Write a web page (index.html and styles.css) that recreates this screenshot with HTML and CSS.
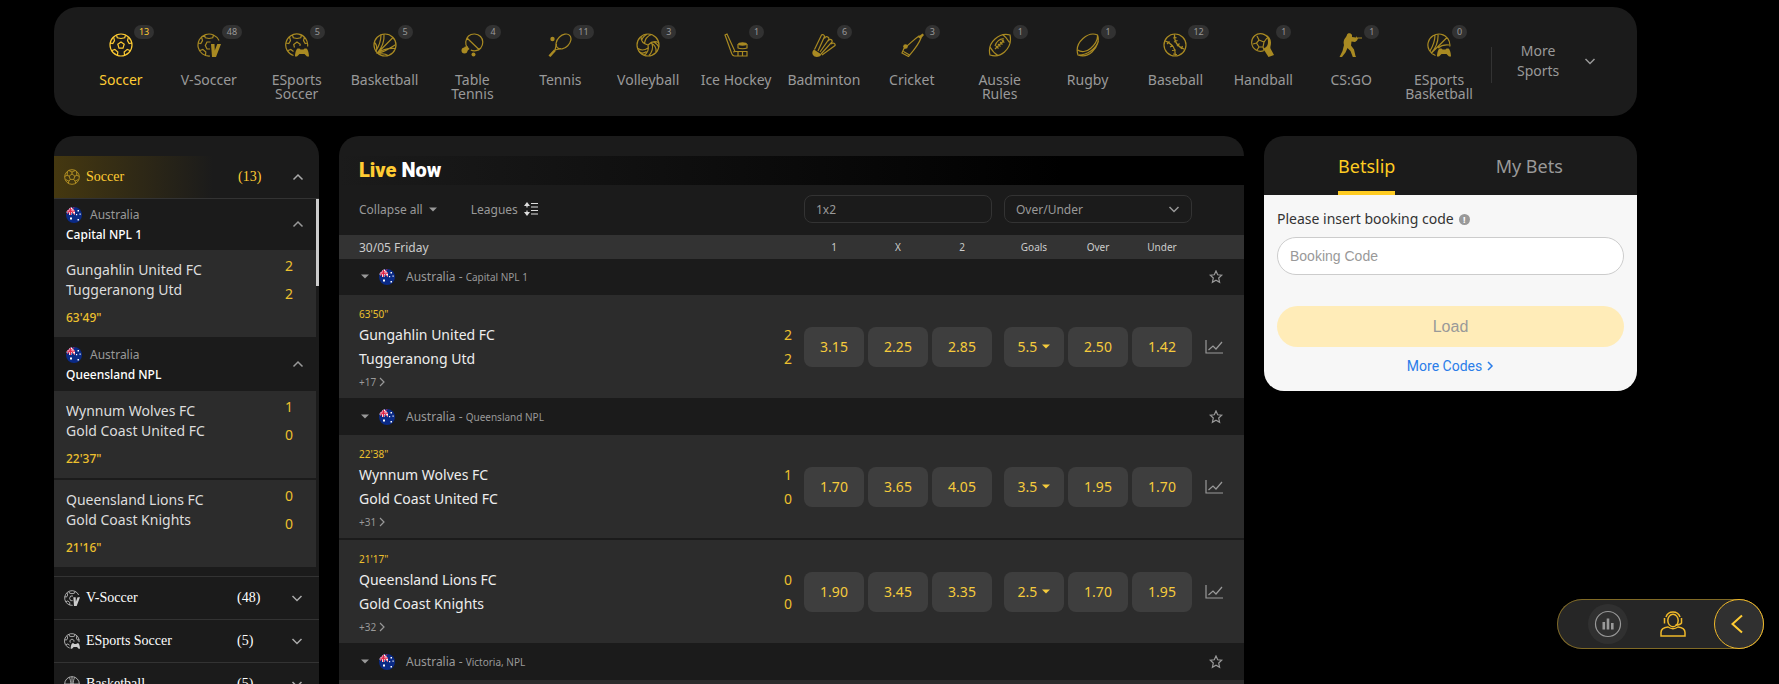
FILE: index.html
```html
<!DOCTYPE html>
<html lang="en">
<head>
    <meta charset="UTF-8">
    <meta name="viewport" content="width=device-width, initial-scale=1.0">
    <title>Live Betting</title>
    <link rel="stylesheet" href="styles.css">
</head>
<body>
    <!-- icon sprite -->
    <svg class="sprite" aria-hidden="true">
        <symbol id="i-soccer" viewBox="0 0 24 24">
            <circle cx="12" cy="12" r="11"/>
            <path d="M12 9l3.2 2.300-1.200 3.900h-4l-1.200-3.900zM7.500 2.200l.8 2.600L12 5.500l3.700-.7.8-2.600M1.200 10l2.600.6 1.700-3-.9-3.400M22.800 10l-2.600.6-1.700-3 .9-3.400M3 17.500l2.800-1.100 3 2.600-.3 3.400M21 17.500l-2.800-1.100-3 2.600.3 3.400"/>
        </symbol>
        <symbol id="i-ball" viewBox="0 0 24 24">
            <circle cx="12" cy="12" r="11"/>
            <path d="M12 7.500l4.300 3.100-1.600 5h-5.400l-1.600-5zM12 7.500V4.500M16.300 10.600l3-1M14.700 15.600l1.900 2.600M9.300 15.600l-1.900 2.600M7.700 10.600l-3-1M7 2.200l5 2.300 5-2.300M22.800 11l-3.500-1.400-.5-5.800M1.200 11l3.500-1.400.5-5.800M17.500 21.500l-.9-3.300 5-2.500M6.500 21.500l.9-3.300-5-2.500"/>
        </symbol>
        <symbol id="i-vsoccer" viewBox="0 0 24 24">
            <path d="M22 7.500A11 11 0 1 0 13 23M7.500 2.200l.8 2.600L12 5.500l3.700-.7.8-2.600M1.200 10l2.600.6 1.700-3-.9-3.400M3 17.500l2.800-1.100 3 2.600-.3 3.400M13.500 9H10l-1.700 3.500L10 16h3"/>
            <path class="solid" d="M14 11h3.500l.3 6.500L20.300 11H24l-5 13h-4z"/>
        </symbol>
        <symbol id="i-esoccer" viewBox="0 0 24 24">
            <path d="M22.600 13.500A11 11 0 1 0 8.500 22.500M7.500 2.200l.8 2.600L12 5.500l3.700-.7.8-2.600M1.200 10l2.600.6 1.700-3-.9-3.400M3 17.500l2.800-1.100 2.700 2M22.800 10l-2.600.6-1.700-3 .9-3.400M9.500 14.500l-.8-3L12 9l3.200 2.300-.3 1.700"/>
            <path class="solid" d="M12.500 15.500h2l1 1h3l1-1h2c1.500 1 2.500 5 2.500 8h-2l-2.500-2.500h-5L12 23.500h-2c0-3 1-7 2.500-8z"/>
        </symbol>
        <symbol id="i-basketball" viewBox="0 0 24 24">
            <circle cx="12" cy="12" r="11"/>
            <path d="M4.500 20L20 4.500M8 1.800C8 9 6 13 3 18M11 1.200C11.500 8 9.500 14 4.500 20M22.500 15.500c-7-.5-12 0-18 4.500 6 0 11-4 18.300-8.500M1.500 9.500c2 2 3 5 1.500 8.500M15 22.500c-2-1.500-5.500-2-8.500-1.500"/>
        </symbol>
        <symbol id="i-tabletennis" viewBox="0 0 24 24">
            <path d="M7.500 14.500c-3-3-2-8.500 1-11.500 3.500-3 9-2.500 12 .5s3 8 .3 11.500c-2.500 3-7 3.500-10 2M7 5l12.500 12"/>
            <circle class="solid" cx="4.500" cy="17.500" r="3"/><path class="solid" d="M4 14l3-1 2.500 3-2.500 2z"/>
            <circle class="solid" cx="13.500" cy="21.500" r="2"/>
        </symbol>
        <symbol id="i-tennis" viewBox="0 0 24 24">
            <ellipse cx="15.500" cy="8.500" rx="8.700" ry="6" transform="rotate(-45 15.500 8.500)"/>
            <path d="M8.500 11L7 17l6-1.500M7 17l-5.500 6"/><path class="solid" d="M6 16.500l1.800 1.600L2.500 24 .5 22.500z"/>
            <circle class="solid" cx="4.500" cy="6" r="2.200"/>
        </symbol>
        <symbol id="i-volleyball" viewBox="0 0 24 24">
            <circle cx="12" cy="12" r="11"/>
            <path d="M12 12c-4-1-7-4-7-8M12 12c3-3 7-4 10.500-2.500M12 12c1 4-.5 8-4 10.500M8.500 10.200C9 6 11.500 3 15.500 1.500M5.500 7.500C7 3.500 9 2 11 1.200M14.500 10c4 1.500 6 5 5.500 9M18 9c3 2 4.500 4 4.800 5M12 15c-3.500 2.500-7 2.500-10 .5M10.500 18.500c-2 1.500-5 2-7 .5M16 10.500c1.500 4 0 9-3 12"/>
        </symbol>
        <symbol id="i-hockey" viewBox="0 0 24 24">
            <path d="M1 2l2-1 8 17.500h12V23H10.500C9 23 8.300 22 7.700 20.500zM14 18.500V23M18.500 18.500V23M9 19l2.500-.5"/>
            <path d="M14 11v4c2 1 7 1 9 0v-4"/><ellipse class="solid" cx="18.500" cy="11" rx="4.500" ry="1.700"/>
        </symbol>
        <symbol id="i-badminton" viewBox="0 0 24 24">
            <path d="M2.500 16.500L9.500 2c1-1 3 0 3 1.500L6 18M12.500 5.500L13.500 4c1.500-1 3.500.5 3.500 2L8 19M16 8l1.500-1.500c2-.5 3 1 2.500 2.500L9 21M19 11l2-1c1.500 0 2.500 1.500 2 2.500l-13 9.500"/>
            <path class="solid" d="M2 16.500l7.500 5C7 25 2.500 24.500 1 22c-1.300-2-.5-4 1-5.500z"/>
        </symbol>
        <symbol id="i-cricket" viewBox="0 0 24 24">
            <path d="M19 3l2 2c-2.500 7-7 12-12.500 18.500L2 20l2-4.500C10 11 13 7 19 3zM3.500 18.500l6 3.500"/>
            <path class="solid" d="M18 4l4.500-3.500L24 2l-3.500 4z"/><circle class="solid" cx="5.500" cy="13.500" r="2.300"/>
        </symbol>
        <symbol id="i-aussie" viewBox="0 0 24 24">
            <path d="M22 2c1.500 7-1 13-5.500 17S6.500 23.500 2 22C.5 16 2.500 10 7 6s9.500-5.500 15-4zM14.500 1.500c3 2 5 4.500 7 8M2 14c2 3.500 4.500 6.500 8 8.500M7 16l9-8.500M8 13l2.500 2.500M10 11l2.500 2.500M12 9l2.500 2.500M13.800 7.200l2.500 2.500M16 6c-4-1-8 3-9 7"/>
        </symbol>
        <symbol id="i-rugby" viewBox="0 0 24 24">
            <path d="M21.500 2c2 5 0 12-5.500 17-4.500 4-10 4.500-14 3-2-6 0-12 5-16.500C11.500 1.500 17 0 21.500 2zM21.500 2c.5 6-3 10-7 13.500S5 19.500 1.700 17M3 22c8 0 17-6 19.500-14"/>
        </symbol>
        <symbol id="i-baseball" viewBox="0 0 24 24">
            <circle cx="12" cy="12" r="11"/>
            <path d="M11.500 1.200c-.5 7 3 12.500 10 15M1.700 7.800c6 2 11 7 10.500 15M10 5l3.500-.3M11 9l3.500-1.500M14 13l2.500-2.500M18 16l1.500-3M4 11l2.500-2.500M7 14l3-1.500M9 17.500l4-.5M10 21l4 .5"/>
        </symbol>
        <symbol id="i-handball" viewBox="0 0 24 24">
            <path d="M13 17.500A8.800 8.800 0 1 1 17 14M8 7l5 2-1 5H8L5.500 10zM8 7L6 3M13 9l3-4M12 14l1 3M8 14l-2 3M5.500 10L2 11"/>
            <path class="solid" d="M15 1.500c3 1.500 5 4.500 5 8 0 3-1 4.500-.5 6l3.500 6.500-5.500 2-3.500-5.500c-2-2-1.500-3.500.5-4 3-2 3.500-7 .5-13z"/>
        </symbol>
        <symbol id="i-csgo" viewBox="0 0 24 24">
            <path class="solid" d="M8 2c0-2 4-2.500 5 0v2l4 .5V3l1 1.500h5v1h-4l-1 2-2 1.500-3.500-.5-.5 4 3 4 1.500 6.500 1 1.500h-3.500l-2.500-6.500L8.500 15l-2 4.500L3 24H.5l3-6L5 12c-1-3 0-6 2-8z"/>
        </symbol>
        <symbol id="i-ebasketball" viewBox="0 0 24 24">
            <path d="M22.800 13.500A11 11 0 1 0 8.500 22.500M4.500 20L20 4.500M8 1.800C8 9 6 13 3 18M11 1.200C11.500 8 9.500 14 4.500 20M22 12c-4-.5-8 .5-11 3"/>
            <path class="solid" d="M12.500 15.500h2l1 1h3l1-1h2c1.500 1 2.500 5 2.500 8h-2l-2.500-2.500h-5L12 23.500h-2c0-3 1-7 2.500-8z"/>
        </symbol>
        <symbol id="i-sidebasket" viewBox="0 0 24 24">
            <circle cx="12" cy="12" r="11"/>
            <path d="M12 1v22M1 12h22M8 2c3 6 3 14 0 20M16 2c-3 6-3 14 0 20"/>
        </symbol>
        <symbol id="i-up" viewBox="0 0 12 12"><path d="M1.500 8.500L6 4l4.500 4.500"/></symbol>
        <symbol id="i-down" viewBox="0 0 12 12"><path d="M1.500 4L6 8.500 10.500 4"/></symbol>
        <symbol id="i-right" viewBox="0 0 8 12"><path d="M2 2l4 4-4 4"/></symbol>
        <symbol id="i-caret" viewBox="0 0 8 5"><path class="solid" d="M0 .5h8L4 4.500z"/></symbol>
        <symbol id="i-star" viewBox="0 0 14 14"><path d="M7 1l1.700 3.800 4 .4-3 2.800.9 4.300L7 10.200l-3.600 2.100.9-4.300-3-2.800 4-.4z"/></symbol>
        <symbol id="i-chart" viewBox="0 0 18 14"><path d="M1 0v13h17"/><path d="M3.500 10L8 6l3 3 6-7"/></symbol>
        <symbol id="i-leagues" viewBox="0 0 14 14">
            <path d="M3 2v3.500M3 8.500V12M7 1.500h7M7 5h7M7 8.500h7M7 12h7"/>
            <path class="solid" d="M0 4l3-4 3 4zM0 10l3 4 3-4z"/>
        </symbol>
        <symbol id="i-flag" viewBox="0 0 16 16">
            <clipPath id="round"><circle cx="8" cy="8" r="8"/></clipPath>
            <g clip-path="url(#round)" stroke="none">
                <path fill="#0a2a86" d="M0 0h16v16H0z"/>
                <path fill="#fff" d="M3 0h2.500L9 4.500V8L5.500 5.500V8H3V5.500H0V3h3z"/>
                <path fill="#e0264a" d="M3.800 0H5v3.500h4v1.200H5V8H3.800V4.700H0V3.500h3.800z"/>
                <path stroke="#e0264a" stroke-width="1" d="M1 1l8 6.500M8.500 0L1 7"/>
                <path fill="#fff" d="M4 10.500h2v2H4zM11.500 3H13v1.500h-1.500zM10 7h1.200v1.200H10zM13.500 6.500h1.200v1.200h-1.200zM11.500 12H13v1.500h-1.500z"/>
            </g>
        </symbol>
        <symbol id="i-stats" viewBox="0 0 28 28">
            <circle cx="14" cy="14" r="12.500"/>
            <path class="solid" d="M8.500 12h2.600v7.500H8.500zM12.700 8.500h2.600v11h-2.600zM17 13h2.600v6.500H17z"/>
        </symbol>
        <symbol id="i-support" viewBox="0 0 26 26">
            <path d="M1 25v-3.500C1 18 4 16.500 8 16c3 2 7 2 10 0 4 .5 7 2 7 5.500V25z"/>
            <ellipse cx="13" cy="9.500" rx="5.200" ry="6.200"/>
            <path d="M6 6C7 3 9.500 1 13 1s6 2 7 5M4.500 7v5.500M21.500 7v5c-1 1.500-3 2-6 2"/>
        </symbol>
    </svg>

    <div class="page">
        <nav class="sports">
            <div class="sport-list">
                <a class="sport active" href="#"><span class="sport-icon"><svg><use href="#i-soccer"/></svg><b>13</b></span>Soccer</a>
                <a class="sport" href="#"><span class="sport-icon"><svg><use href="#i-vsoccer"/></svg><b>48</b></span>V-Soccer</a>
                <a class="sport" href="#"><span class="sport-icon"><svg><use href="#i-esoccer"/></svg><b>5</b></span>ESports Soccer</a>
                <a class="sport" href="#"><span class="sport-icon"><svg><use href="#i-basketball"/></svg><b>5</b></span>Basketball</a>
                <a class="sport" href="#"><span class="sport-icon"><svg><use href="#i-tabletennis"/></svg><b>4</b></span>Table<br>Tennis</a>
                <a class="sport" href="#"><span class="sport-icon"><svg><use href="#i-tennis"/></svg><b>11</b></span>Tennis</a>
                <a class="sport" href="#"><span class="sport-icon"><svg><use href="#i-volleyball"/></svg><b>3</b></span>Volleyball</a>
                <a class="sport" href="#"><span class="sport-icon"><svg><use href="#i-hockey"/></svg><b>1</b></span>Ice Hockey</a>
                <a class="sport" href="#"><span class="sport-icon"><svg><use href="#i-badminton"/></svg><b>6</b></span>Badminton</a>
                <a class="sport" href="#"><span class="sport-icon"><svg><use href="#i-cricket"/></svg><b>3</b></span>Cricket</a>
                <a class="sport" href="#"><span class="sport-icon"><svg><use href="#i-aussie"/></svg><b>1</b></span>Aussie<br>Rules</a>
                <a class="sport" href="#"><span class="sport-icon"><svg><use href="#i-rugby"/></svg><b>1</b></span>Rugby</a>
                <a class="sport" href="#"><span class="sport-icon"><svg><use href="#i-baseball"/></svg><b>12</b></span>Baseball</a>
                <a class="sport" href="#"><span class="sport-icon"><svg><use href="#i-handball"/></svg><b>1</b></span>Handball</a>
                <a class="sport" href="#"><span class="sport-icon"><svg><use href="#i-csgo"/></svg><b>1</b></span>CS:GO</a>
                <a class="sport" href="#"><span class="sport-icon"><svg><use href="#i-ebasketball"/></svg><b>0</b></span>ESports Basketball</a>
            </div>
            <button class="more-sports"><span>More<br>Sports</span><svg class="chev"><use href="#i-down"/></svg></button>
        </nav>

        <div class="columns">
            <aside class="sidebar">
                <button class="side-sport open"><svg class="side-icon"><use href="#i-ball"/></svg><span class="side-name">Soccer</span><span class="side-count">(13)</span><svg class="chev"><use href="#i-up"/></svg></button>
                <div class="side-list">
                    <button class="side-league">
                        <span class="side-country"><svg class="flag"><use href="#i-flag"/></svg>Australia</span>
                        <span class="side-title">Capital NPL 1</span>
                        <svg class="chev"><use href="#i-up"/></svg>
                    </button>
                    <a class="side-event" href="#">
                        <span class="side-teams">Gungahlin United FC<br>Tuggeranong Utd<span class="side-time">63'49"</span></span>
                        <span class="side-score">2<br>2</span>
                    </a>
                    <button class="side-league">
                        <span class="side-country"><svg class="flag"><use href="#i-flag"/></svg>Australia</span>
                        <span class="side-title">Queensland NPL</span>
                        <svg class="chev"><use href="#i-up"/></svg>
                    </button>
                    <a class="side-event" href="#">
                        <span class="side-teams">Wynnum Wolves FC<br>Gold Coast United FC<span class="side-time">22'37"</span></span>
                        <span class="side-score">1<br>0</span>
                    </a>
                    <a class="side-event" href="#">
                        <span class="side-teams">Queensland Lions FC<br>Gold Coast Knights<span class="side-time">21'16"</span></span>
                        <span class="side-score">0<br>0</span>
                    </a>
                    <span class="scroll-thumb"></span>
                </div>
                <button class="side-sport"><svg class="side-icon"><use href="#i-vsoccer"/></svg><span class="side-name">V-Soccer</span><span class="side-count">(48)</span><svg class="chev"><use href="#i-down"/></svg></button>
                <button class="side-sport"><svg class="side-icon"><use href="#i-esoccer"/></svg><span class="side-name">ESports Soccer</span><span class="side-count">(5)</span><svg class="chev"><use href="#i-down"/></svg></button>
                <button class="side-sport"><svg class="side-icon"><use href="#i-sidebasket"/></svg><span class="side-name">Basketball</span><span class="side-count">(5)</span><svg class="chev"><use href="#i-down"/></svg></button>
            </aside>

            <main class="live">
                <h1 class="live-title"><span>Live</span> Now</h1>
                <div class="controls">
                    <button class="control">Collapse all <svg class="caret"><use href="#i-caret"/></svg></button>
                    <button class="control">Leagues <svg class="leagues-icon"><use href="#i-leagues"/></svg></button>
                    <div class="markets">
                        <select class="market" aria-label="First market"><option>1x2</option></select>
                        <span class="market-wrap">
                            <select class="market" aria-label="Second market"><option>Over/Under</option></select>
                            <svg class="chev"><use href="#i-down"/></svg>
                        </span>
                    </div>
                </div>
                <div class="date-row">
                    <span class="date">30/05 Friday</span>
                    <div class="group"><span>1</span><span>X</span><span>2</span></div>
                    <div class="group"><span>Goals</span><span>Over</span><span>Under</span></div>
                </div>

                <div class="league">
                    <svg class="caret"><use href="#i-caret"/></svg><svg class="flag"><use href="#i-flag"/></svg>
                    <span class="league-name">Australia - <small>Capital NPL 1</small></span>
                    <button class="star" aria-label="Favourite"><svg><use href="#i-star"/></svg></button>
                </div>
                <div class="event">
                    <div class="event-info">
                        <div class="time">63'50"</div>
                        <div class="team"><span>Gungahlin United FC</span><span class="score">2</span></div>
                        <div class="team"><span>Tuggeranong Utd</span><span class="score">2</span></div>
                        <a class="more" href="#">+17<svg><use href="#i-right"/></svg></a>
                    </div>
                    <div class="group"><button class="odd">3.15</button><button class="odd">2.25</button><button class="odd">2.85</button></div>
                    <div class="group"><button class="odd">5.5 <svg class="caret"><use href="#i-caret"/></svg></button><button class="odd">2.50</button><button class="odd">1.42</button></div>
                    <button class="stats" aria-label="Statistics"><svg><use href="#i-chart"/></svg></button>
                </div>

                <div class="league">
                    <svg class="caret"><use href="#i-caret"/></svg><svg class="flag"><use href="#i-flag"/></svg>
                    <span class="league-name">Australia - <small>Queensland NPL</small></span>
                    <button class="star" aria-label="Favourite"><svg><use href="#i-star"/></svg></button>
                </div>
                <div class="event">
                    <div class="event-info">
                        <div class="time">22'38"</div>
                        <div class="team"><span>Wynnum Wolves FC</span><span class="score">1</span></div>
                        <div class="team"><span>Gold Coast United FC</span><span class="score">0</span></div>
                        <a class="more" href="#">+31<svg><use href="#i-right"/></svg></a>
                    </div>
                    <div class="group"><button class="odd">1.70</button><button class="odd">3.65</button><button class="odd">4.05</button></div>
                    <div class="group"><button class="odd">3.5 <svg class="caret"><use href="#i-caret"/></svg></button><button class="odd">1.95</button><button class="odd">1.70</button></div>
                    <button class="stats" aria-label="Statistics"><svg><use href="#i-chart"/></svg></button>
                </div>
                <div class="event">
                    <div class="event-info">
                        <div class="time">21'17"</div>
                        <div class="team"><span>Queensland Lions FC</span><span class="score">0</span></div>
                        <div class="team"><span>Gold Coast Knights</span><span class="score">0</span></div>
                        <a class="more" href="#">+32<svg><use href="#i-right"/></svg></a>
                    </div>
                    <div class="group"><button class="odd">1.90</button><button class="odd">3.45</button><button class="odd">3.35</button></div>
                    <div class="group"><button class="odd">2.5 <svg class="caret"><use href="#i-caret"/></svg></button><button class="odd">1.70</button><button class="odd">1.95</button></div>
                    <button class="stats" aria-label="Statistics"><svg><use href="#i-chart"/></svg></button>
                </div>

                <div class="league">
                    <svg class="caret"><use href="#i-caret"/></svg><svg class="flag"><use href="#i-flag"/></svg>
                    <span class="league-name">Australia - <small>Victoria, NPL</small></span>
                    <button class="star" aria-label="Favourite"><svg><use href="#i-star"/></svg></button>
                </div>
                <div class="event"></div>
            </main>

            <section class="betslip">
                <div class="tabs">
                    <button class="tab active">Betslip</button>
                    <button class="tab">My Bets</button>
                </div>
                <form class="booking">
                    <label for="code">Please insert booking code <span class="info">!</span></label>
                    <input id="code" type="text" placeholder="Booking Code">
                    <button class="load" type="button">Load</button>
                    <a class="codes" href="#">More Codes <svg><use href="#i-right"/></svg></a>
                </form>
            </section>
        </div>
    </div>

    <div class="dock">
        <button class="dock-stats" aria-label="Results"><svg><use href="#i-stats"/></svg></button>
        <button class="dock-support" aria-label="Support"><svg><use href="#i-support"/></svg></button>
        <button class="dock-toggle" aria-label="Close"><svg viewBox="0 0 14 20"><path d="M12 1.500L2.500 10l9.500 8.500"/></svg></button>
    </div>
</body>
</html>
```

FILE: styles.css
```css
* {
    box-sizing: border-box;
}
body {
    margin: 0;
    background-color: #000;
    color: #999;
    font-family: "Segoe UI", "Noto Sans", sans-serif;
    font-size: 14px;
}
a {
    color: inherit;
    text-decoration: none;
}
button {
    padding: 0;
    border: 0;
    background: none;
    color: inherit;
    font: inherit;
    cursor: pointer;
}
svg {
    display: block;
    fill: none;
    stroke: currentColor;
    stroke-width: 1.2;
}
.solid {
    fill: currentColor;
    stroke: none;
}
.sprite {
    position: absolute;
    width: 0;
    height: 0;
}
.chev {
    width: 12px;
    height: 12px;
    stroke-width: 1.5;
    flex: none;
}
.caret {
    width: 8px;
    height: 5px;
    flex: none;
}
.flag {
    width: 16px;
    height: 16px;
    flex: none;
}
.page {
    height: 100vh;
    padding: 7px 142px 0 54px;
    overflow: hidden;
}

/* top sports bar */
.sports {
    display: flex;
    height: 109px;
    padding-left: 23px;
    border-radius: 24px;
    background-color: #1b1b1b;
}
.sport-list {
    flex: 1;
    display: flex;
    margin-right: 8px;
}
.sport {
    flex: 1 1 0;
    min-width: 0;
    padding-top: 26px;
    text-align: center;
    line-height: 14px;
}
.sport-icon {
    display: block;
    position: relative;
    width: 24px;
    margin: 0 auto 16px;
    color: #a98a22;
}
.sport-icon svg {
    width: 24px;
    height: 24px;
}
.sport-icon b {
    position: absolute;
    top: -8px;
    left: 25px;
    min-width: 14px;
    padding: 0 5px;
    border-radius: 7px;
    background-color: #323232;
    color: #999;
    font-size: 9px;
    font-weight: normal;
}
.sport.active,
.sport.active .sport-icon {
    color: #fc3;
}
.sport.active b {
    color: #fc3;
}
.more-sports {
    display: flex;
    align-items: center;
    gap: 25px;
    width: 146px;
    margin: 40px 0 33px;
    padding: 0 0 8px 25px;
    border-left: 1px solid #333;
    line-height: 20px;
}

.columns {
    display: flex;
    align-items: flex-start;
    gap: 20px;
    margin-top: 20px;
}

/* left menu */
.sidebar {
    width: 265px;
    flex: none;
    padding-top: 20px;
    border-radius: 20px 20px 0 0;
    background-color: #1b1b1b;
}
.side-sport {
    display: flex;
    align-items: center;
    width: 100%;
    height: 43px;
    padding: 0 16px 0 10px;
    border-top: 1px solid #333;
    color: #fff;
    font-family: "Liberation Serif", serif;
    text-align: left;
}
.side-sport.open {
    height: 42px;
    padding-right: 15px;
    border-top: 0;
    background: linear-gradient(90deg, #453810, #1b1b1b 60%);
    color: #fc3;
}
.side-icon {
    width: 16px;
    height: 16px;
    margin-right: 6px;
    color: #ccc;
}
.open .side-icon {
    color: #c9a227;
}
.side-name {
    flex: 1;
}
.side-count {
    width: 54px;
}
.side-sport .chev {
    color: #aaa;
}
.side-list {
    position: relative;
    padding: 0 3px 7px 0;
    border-top: 1px solid #333;
}
.side-list .side-league:first-child {
    height: 51px;
}
.side-league {
    display: block;
    position: relative;
    width: 100%;
    height: 52px;
    padding-left: 12px;
    text-align: left;
    line-height: 20px;
}
.side-league .chev {
    position: absolute;
    top: 19px;
    right: 12px;
}
.side-country {
    display: flex;
    align-items: center;
    gap: 8px;
    font-size: 12px;
}
.side-title {
    display: block;
    color: #fff;
    font-size: 12px;
    font-weight: 500;
}
.side-event {
    display: flex;
    justify-content: space-between;
    height: 89px;
    padding: 0 23px 0 12px;
    border-bottom: 2px solid #1b1b1b;
    background-color: #2c2c2c;
    color: #ddd;
}
.side-teams {
    padding-top: 10px;
    line-height: 20px;
}
.side-time {
    display: block;
    margin-top: 8px;
    color: #edc02e;
    font-size: 12px;
    font-weight: 500;
}
.side-score {
    padding-top: 2px;
    color: #edc02e;
    line-height: 28px;
}
.scroll-thumb {
    position: absolute;
    top: 0;
    right: 0;
    width: 3px;
    height: 87px;
    background-color: #ccc;
}

/* live events */
.live {
    flex: 1;
    padding-top: 20px;
    border-radius: 20px 20px 0 0;
    background-color: #1b1b1b;
}
.live-title {
    margin: 0;
    padding-left: 20px;
    background: linear-gradient(90deg, #1b1b1b, #000 80%);
    color: #fff;
    font-family: Impact, Roboto, sans-serif;
    font-size: 20px;
    font-weight: 900;
    line-height: 29px;
}
.live-title span {
    color: #fc3;
}
.controls {
    display: flex;
    align-items: center;
    gap: 34px;
    height: 50px;
    padding: 0 52px 2px 20px;
    font-size: 12px;
}
.control {
    display: flex;
    align-items: center;
    gap: 6px;
}
.leagues-icon {
    width: 14px;
    height: 14px;
    color: #ddd;
}
.markets {
    display: flex;
    gap: 12px;
    margin-left: auto;
}
.market-wrap {
    position: relative;
}
.market-wrap .chev {
    position: absolute;
    top: 8px;
    right: 12px;
    pointer-events: none;
}
.market {
    appearance: none;
    display: block;
    width: 188px;
    height: 28px;
    padding: 0 11px;
    border: 1px solid #333;
    border-radius: 8px;
    background-color: #1b1b1b;
    color: #999;
    font: inherit;
}
.group {
    display: grid;
    grid-template-columns: repeat(3, 60px);
    gap: 4px;
    margin-left: 12px;
}
.date-row {
    display: flex;
    align-items: center;
    height: 25px;
    padding: 0 52px 0 20px;
    border-bottom: 1px solid #1b1b1b;
    background-color: #333;
    color: #ccc;
    font-size: 10px;
    text-align: center;
}
.date {
    margin-right: auto;
    font-size: 12px;
}
.league {
    display: flex;
    align-items: center;
    height: 35px;
    padding: 0 21px 2px 22px;
}
.league .flag {
    margin: 0 11px 0 10px;
}
.league-name {
    flex: 1;
    font-size: 12px;
}
.league-name small {
    font-size: 10px;
}
.star svg {
    width: 14px;
    height: 14px;
}
.event {
    display: flex;
    align-items: center;
    min-height: 105px;
    padding-left: 20px;
    border-bottom: 2px solid #1b1b1b;
    background-color: #2c2c2c;
}
.event-info {
    flex: 1;
    padding: 12px 0 8px;
}
.time {
    margin-bottom: 2px;
    color: #edc02e;
    font-size: 10px;
    line-height: 14px;
}
.team {
    display: flex;
    justify-content: space-between;
    color: #eee;
    line-height: 24px;
}
.score {
    color: #edc02e;
}
.more {
    display: flex;
    align-items: center;
    gap: 2px;
    margin-top: 3px;
    font-size: 10px;
    line-height: 16px;
}
.more svg {
    width: 8px;
    height: 12px;
}
.odd {
    display: flex;
    align-items: center;
    justify-content: center;
    gap: 5px;
    height: 40px;
    border-radius: 8px;
    background-color: #3e3e3e;
    color: #f5cb3c;
}
.stats {
    width: 52px;
    padding-left: 13px;
}
.stats svg {
    width: 18px;
    height: 14px;
}

/* betslip */
.betslip {
    width: 373px;
    flex: none;
    overflow: hidden;
    border-radius: 20px;
    background: linear-gradient(#1b1b1b 59px, #f7f7f7 59px);
}
.tabs {
    display: flex;
    justify-content: space-around;
    padding: 0 24px;
    font-size: 18px;
}
.tab {
    height: 59px;
    border-top: 4px solid transparent;
    border-bottom: 4px solid transparent;
}
.tab.active {
    border-bottom-color: #fc2;
    color: #fc2;
}
.booking {
    display: flex;
    flex-direction: column;
    padding: 14px 13px 15px;
}
.booking label {
    display: flex;
    align-items: center;
    gap: 5px;
    margin-bottom: 8px;
    color: #333;
    line-height: 20px;
}
.info {
    width: 11px;
    height: 11px;
    border-radius: 50%;
    background-color: #999;
    color: #fff;
    font-size: 9px;
    font-weight: bold;
    line-height: 11px;
    text-align: center;
}
.booking input {
    height: 38px;
    margin-bottom: 31px;
    padding: 0 12px;
    border: 1px solid #ccc;
    border-radius: 19px;
    background-color: #fff;
    font: 14px "Liberation Sans", sans-serif;
}
.booking input::placeholder {
    color: #999;
}
.load {
    height: 41px;
    border-radius: 21px;
    background-color: #ffecb8;
    color: #999;
    font: 16px "Liberation Sans", sans-serif;
}
.codes {
    display: flex;
    align-items: center;
    justify-content: center;
    gap: 4px;
    margin-top: 9px;
    color: #2b7de9;
    font-family: Roboto, sans-serif;
    line-height: 20px;
}
.codes svg {
    width: 8px;
    height: 12px;
    stroke-width: 1.5;
}

/* floating shortcuts */
.dock {
    position: fixed;
    right: 15px;
    bottom: 35px;
    display: flex;
    align-items: center;
    padding-left: 31px;
    border-radius: 25px;
    background-color: #262626;
    box-shadow: inset 0 0 0 1px #806a26;
}
.dock-stats {
    width: 40px;
    height: 40px;
    padding: 6px;
    border-radius: 50%;
    background-color: #303030;
}
.dock-stats svg {
    width: 28px;
    height: 28px;
}
.dock-support {
    margin: 0 28px 0 32px;
    color: #f0b92a;
}
.dock-support svg {
    width: 26px;
    height: 26px;
    stroke-width: 1.5;
}
.dock-toggle {
    width: 50px;
    height: 50px;
    padding-left: 15px;
    border: 1px solid #f0b92a;
    border-radius: 50%;
    background-color: #303030;
    color: #fc3;
}
.dock-toggle svg {
    width: 14px;
    height: 20px;
    stroke-width: 2;
}
```
